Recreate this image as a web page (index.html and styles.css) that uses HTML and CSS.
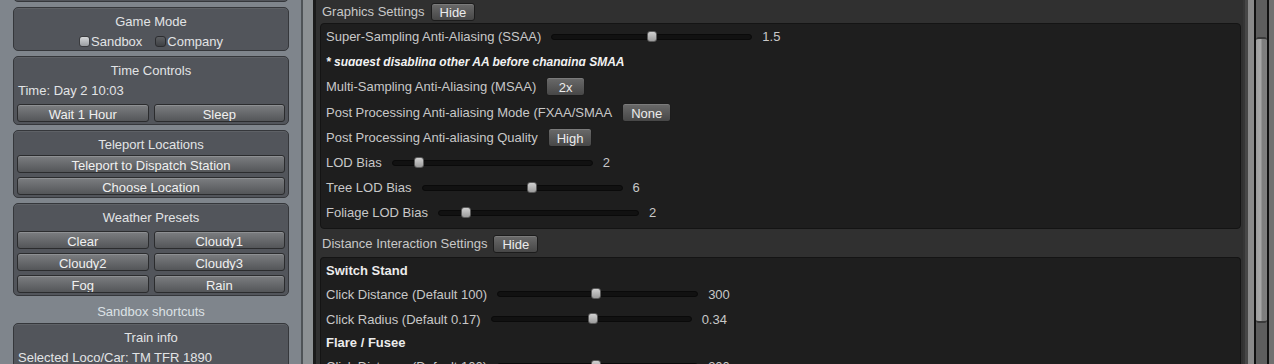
FILE: index.html
```html
<!DOCTYPE html>
<html lang="en">
<head>
    <meta charset="UTF-8">
    <meta name="viewport" content="width=device-width, initial-scale=1.0">
    <title>Mod Settings</title>
    <link rel="stylesheet" href="styles.css">
</head>
<body>
<div class="screen">

    <aside class="side">
        <div class="box box-cut"></div>

        <div class="box">
            <div class="box-title">Game Mode</div>
            <div class="radios">
                <label class="radio on"><span class="radio-mark"></span>Sandbox</label>
                <label class="radio"><span class="radio-mark"></span>Company</label>
            </div>
        </div>

        <div class="box">
            <div class="box-title">Time Controls</div>
            <div class="box-text">Time: Day 2 10:03</div>
            <div class="btn-grid">
                <button class="btn">Wait 1 Hour</button>
                <button class="btn">Sleep</button>
            </div>
        </div>

        <div class="box">
            <div class="box-title">Teleport Locations</div>
            <div class="btn-list">
                <button class="btn">Teleport to Dispatch Station</button>
                <button class="btn">Choose Location</button>
            </div>
        </div>

        <div class="box">
            <div class="box-title">Weather Presets</div>
            <div class="btn-grid">
                <button class="btn">Clear</button>
                <button class="btn">Cloudy1</button>
                <button class="btn">Cloudy2</button>
                <button class="btn">Cloudy3</button>
                <button class="btn">Fog</button>
                <button class="btn">Rain</button>
            </div>
        </div>

        <div class="side-label">Sandbox shortcuts</div>

        <div class="box">
            <div class="box-title">Train info</div>
            <div class="box-text">Selected Loco/Car: TM TFR 1890</div>
        </div>
    </aside>

    <div class="divider"></div>

    <main class="settings">
        <div class="section-head first">
            <span>Graphics Settings</span>
            <button class="pick">Hide</button>
        </div>
        <div class="panel">
            <div class="row">
                <span>Super-Sampling Anti-Aliasing (SSAA)</span>
                <div class="slider"><div class="rail"><span class="thumb" style="left:50%"></span></div></div>
                <span>1.5</span>
            </div>
            <div class="row note"><span>* suggest disabling other AA before changing SMAA</span></div>
            <div class="row">
                <span>Multi-Sampling Anti-Aliasing (MSAA)</span>
                <button class="pick">2x</button>
            </div>
            <div class="row">
                <span>Post Processing Anti-aliasing Mode (FXAA/SMAA</span>
                <button class="pick">None</button>
            </div>
            <div class="row">
                <span>Post Processing Anti-aliasing Quality</span>
                <button class="pick">High</button>
            </div>
            <div class="row">
                <span>LOD Bias</span>
                <div class="slider"><div class="rail"><span class="thumb" style="left:11.5%"></span></div></div>
                <span>2</span>
            </div>
            <div class="row">
                <span>Tree LOD Bias</span>
                <div class="slider"><div class="rail"><span class="thumb" style="left:55.5%"></span></div></div>
                <span>6</span>
            </div>
            <div class="row">
                <span>Foliage LOD Bias</span>
                <div class="slider"><div class="rail"><span class="thumb" style="left:11.5%"></span></div></div>
                <span>2</span>
            </div>
        </div>

        <div class="section-head">
            <span>Distance Interaction Settings</span>
            <button class="pick">Hide</button>
        </div>
        <div class="panel panel-open">
            <div class="heading">Switch Stand</div>
            <div class="row">
                <span>Click Distance (Default 100)</span>
                <div class="slider"><div class="rail"><span class="thumb" style="left:49%"></span></div></div>
                <span>300</span>
            </div>
            <div class="row">
                <span>Click Radius (Default 0.17)</span>
                <div class="slider"><div class="rail"><span class="thumb" style="left:51%"></span></div></div>
                <span>0.34</span>
            </div>
            <div class="heading">Flare / Fusee</div>
            <div class="row">
                <span>Click Distance (Default 100)</span>
                <div class="slider"><div class="rail"><span class="thumb" style="left:49%"></span></div></div>
                <span>300</span>
            </div>
        </div>
    </main>

    <div class="scroll">
        <span class="strip s1"></span>
        <span class="strip s2"></span>
        <span class="strip s3"></span>
        <span class="strip s4"></span>
        <div class="track"><div class="track-thumb"></div></div>
        <span class="strip s4"></span>
        <span class="strip s5"></span>
    </div>

</div>
</body>
</html>
```

FILE: styles.css
```css
* {
    box-sizing: border-box;
}

body {
    margin: 0;
    font-family: "Liberation Sans", Arial, sans-serif;
    font-size: 13px;
    background-color: #303030;
    overflow: hidden;
}

.screen {
    display: flex;
    height: 364px;
    overflow: hidden;
}

/* left column */

.side {
    width: 301px;
    flex: none;
    background-color: #7f858c;
    padding: 0 12px 0 13px;
    display: flex;
    flex-direction: column;
    gap: 5px;
    color: #e2e4e6;
}

.box {
    flex: none;
    background-color: #52555b;
    border: 1px solid #35373b;
    border-radius: 5px;
    padding: 3px 3px 2px 3px;
    box-shadow: inset 0 1px 0 rgba(255, 255, 255, 0.07);
}

.box-cut {
    height: 30px;
    margin-top: -28px;
}

.box-title {
    height: 21px;
    line-height: 21px;
    text-align: center;
}

.box-text {
    height: 20px;
    line-height: 20px;
    padding-left: 1px;
}

.radios {
    height: 16px;
    padding-top: 3px;
    display: flex;
    justify-content: center;
    align-items: center;
    gap: 13px;
}

.radio {
    display: flex;
    align-items: center;
    line-height: 13px;
}

.radio-mark {
    width: 11px;
    height: 11px;
    margin-right: 1px;
    border: 1px solid #2c2d30;
    border-radius: 3px;
    background: linear-gradient(#5d5f63, #3f4144);
}

.radio.on .radio-mark {
    background: linear-gradient(#d4d6d8, #9a9da1);
    border-color: #3a3b3e;
}

.btn-grid {
    display: grid;
    grid-template-columns: 1fr 1fr;
    gap: 4px 5px;
    margin-top: 3px;
}

.btn-list {
    display: flex;
    flex-direction: column;
    gap: 4px;
}

.btn {
    height: 18px;
    padding: 0;
    overflow: hidden;
    font: inherit;
    line-height: 19px;
    color: #f0f0f0;
    text-align: center;
    border: 1px solid #2b2c2e;
    border-radius: 3px;
    background: linear-gradient(#7c7e81, #545659);
    box-shadow: inset 0 1px 0 rgba(255, 255, 255, 0.15);
}

.side-label {
    height: 22px;
    line-height: 22px;
    margin-bottom: -5px;
    text-align: center;
    color: #dce1e5;
}

.divider {
    width: 15px;
    flex: none;
    background-color: #8d9194;
    border-left: 2px solid #4f5357;
    border-right: 3px solid #1b1b1b;
}

/* right column */

.settings {
    width: 927px;
    flex: none;
    padding: 0 2px 0 4px;
    background-color: #303030;
    color: #c8c8c8;
    display: flex;
    flex-direction: column;
}

.section-head {
    height: 28px;
    padding: 2px 0 0 2px;
    display: flex;
    align-items: center;
    gap: 6px;
    flex: none;
}

.section-head.first {
    height: 23px;
    padding-top: 0;
}

.panel {
    flex: none;
    background-color: #1e1e1e;
    border: 1px solid #141414;
    border-radius: 4px;
    padding: 0 0 2px 5px;
}

.panel-open {
    padding-top: 2px;
    border-bottom: none;
    border-radius: 4px 4px 0 0;
}

.row {
    height: 25.2px;
    display: flex;
    align-items: center;
    gap: 10px;
    white-space: nowrap;
}

.row.note {
    align-items: flex-start;
    padding-top: 6px;
}

.note span {
    display: block;
    height: 11px;
    line-height: 14px;
    overflow: hidden;
    font-size: 12px;
    font-weight: bold;
    font-style: italic;
    color: #f2f2f2;
}

.heading {
    height: 22px;
    line-height: 22px;
    font-weight: bold;
    color: #ececec;
}

.slider {
    width: 201px;
    height: 6px;
    flex: none;
    background-color: #111;
    border: 1px solid #0a0a0a;
    border-radius: 3px;
}

.rail {
    position: relative;
    margin: 0 5px;
    height: 100%;
}

.thumb {
    position: absolute;
    top: -4px;
    width: 10px;
    height: 11px;
    margin-left: -5px;
    border-radius: 3px;
    border: 1px solid #5a5a5a;
    background: linear-gradient(#d0d0d0, #9c9c9c);
}

.pick {
    height: 19px;
    min-width: 39px;
    padding: 0 8px;
    overflow: hidden;
    font: inherit;
    line-height: 19px;
    color: #ececec;
    border: 1px solid #1c1c1c;
    border-radius: 3px;
    background: linear-gradient(#6a6a6a, #474747);
    box-shadow: inset 0 1px 0 rgba(255, 255, 255, 0.12);
}

.section-head .pick {
    height: 18px;
    line-height: 18px;
}

/* scrollbar */

.scroll {
    width: 31px;
    flex: none;
    display: flex;
}

.strip {
    display: block;
    height: 100%;
}

.s1 { width: 2px; background-color: #363636; }
.s2 { width: 3px; background-color: #474747; }
.s3 { width: 6px; background-color: #8a8a8a; }
.s4 { width: 2px; background-color: #111; }
.s5 { width: 5px; background-color: #707070; }

.track {
    width: 11px;
    background-color: #5e5e5e;
}

.track-thumb {
    margin-top: 37px;
    height: 286px;
    border-radius: 3px;
    border-top: 2px solid #3a3a3a;
    border-bottom: 2px solid #3a3a3a;
    background: linear-gradient(to right, #9c9c9c, #a8a8a8 40%, #7c7c7c 60%, #808080);
}
```
